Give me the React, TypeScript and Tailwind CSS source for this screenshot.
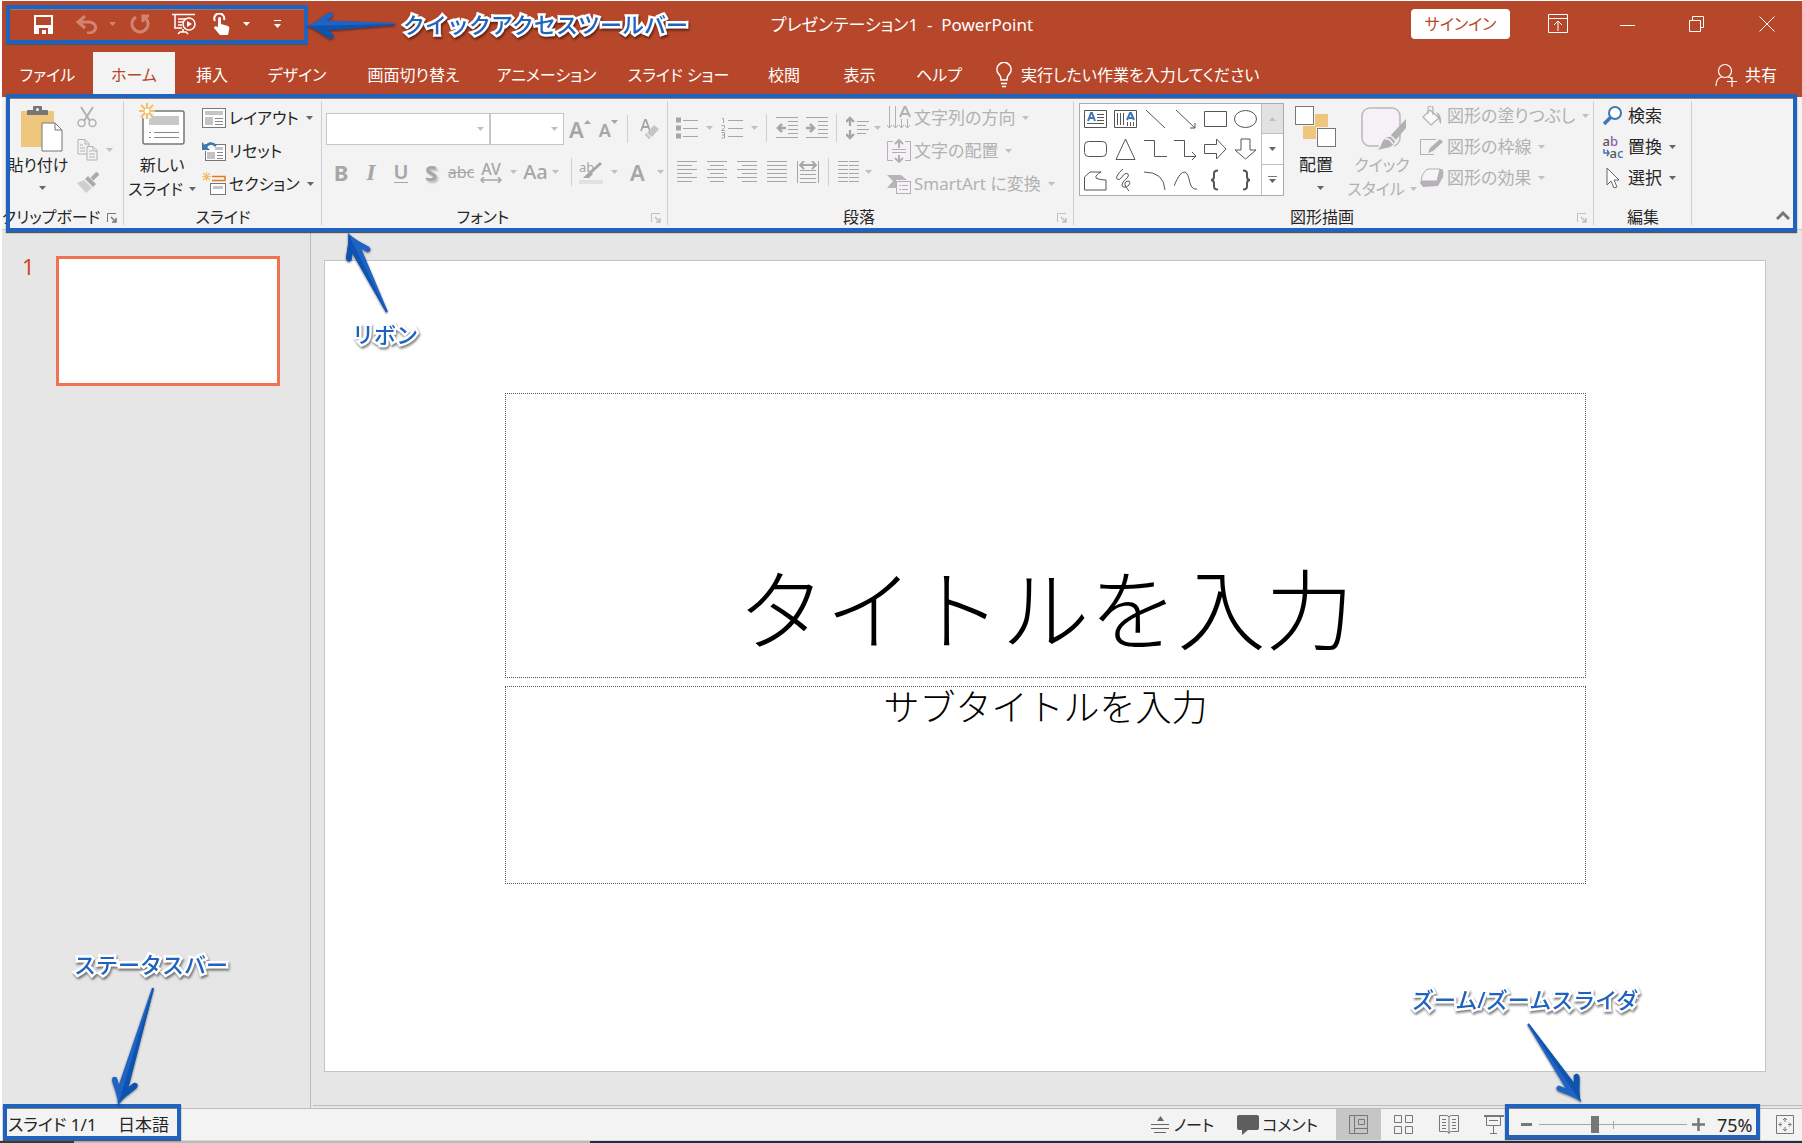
import React from "react";

type Kids = { children?: React.ReactNode };

/* ---------- shared pieces ---------- */

function Svg({ w, h, children, className = "" }: Kids & { w: number; h: number; className?: string }) {
  return (
    <svg width={w} height={h} viewBox={`0 0 ${w} ${h}`} fill="none" stroke="currentColor" strokeWidth={1.5} aria-hidden="true" className={`shrink-0 ${className}`}>
      {children}
    </svg>
  );
}

function Caret({ className = "text-[#666666]" }: { className?: string }) {
  return (
    <svg width="7" height="4" viewBox="0 0 7 4" aria-hidden="true" className={`shrink-0 ${className}`}>
      <path d="M0 0h7L3.5 4z" fill="currentColor" />
    </svg>
  );
}

function Divider() {
  return <span className="block h-7 w-px shrink-0 bg-[#d0d0d0]" />;
}

function Launcher({ className = "text-[#777777]" }: { className?: string }) {
  return (
    <button type="button" aria-label="詳細設定" className={`absolute right-[7px] top-[8px] ${className}`}>
      <Svg w={10} h={10}>
        <path d="M.5 9V.5H9" strokeWidth={1} />
        <path d="M4 4l4 4M9 5v4H5" strokeWidth={1.5} />
      </Svg>
    </button>
  );
}

function Group({ label, width, launcher, children }: Kids & { label: string; width: string; launcher?: React.ReactNode }) {
  return (
    <section aria-label={label} className={`relative flex shrink-0 flex-col ${width}`}>
      <div className="flex h-[108px]">{children}</div>
      <div className={`relative flex h-6 items-center justify-center whitespace-nowrap ${launcher ? "pr-6" : ""}`}>
        <span>{label}</span>
        {launcher}
      </div>
      <span className="absolute bottom-1 right-0 top-1 w-px bg-[#d0d0d0]" />
    </section>
  );
}

function Row({ icon, text, caret, disabled, height = "h-[33px]" }: { icon: React.ReactNode; text: string; caret?: boolean; disabled?: boolean; height?: string }) {
  return (
    <button type="button" disabled={disabled} className={`flex items-center gap-[3px] ${height} ${disabled ? "text-[#b1b1b1]" : ""}`}>
      <span className="flex w-6 shrink-0 justify-center">{icon}</span>
      <span>{text}</span>
      {caret && <Caret className={disabled ? "ml-1 text-[#c0c0c0]" : "ml-1 text-[#666666]"} />}
    </button>
  );
}

function Frame({ className }: { className: string }) {
  return <div className={`pointer-events-none absolute z-10 border-4 border-[#1f63bf] shadow-[0_1px_1px_#555,inset_0_1px_0_#8a7f7a] ${className}`} />;
}

function Note({ children, className }: Kids & { className: string }) {
  return (
    <p className={`pointer-events-none absolute z-10 whitespace-nowrap text-[22px] font-medium leading-6 text-[#1f63bf] drop-shadow-[1px_2px_1px_rgba(0,0,0,0.5)] [-webkit-text-stroke:5px_white] [font-feature-settings:normal] [paint-order:stroke_fill] ${className}`}>
      {children}
    </p>
  );
}

/* Tapered pointer from (tailX, tailY) to (tipX, tipY). */
function Pointer({ w, h, tip, tail, className }: { w: number; h: number; tip: [number, number]; tail: [number, number]; className: string }) {
  const dx = tail[0] - tip[0];
  const dy = tail[1] - tip[1];
  const len = Math.hypot(dx, dy);
  const angle = (Math.atan2(dy, dx) * 180) / Math.PI;
  return (
    <svg width={w} height={h} viewBox={`0 0 ${w} ${h}`} aria-hidden="true" className={`pointer-events-none absolute z-20 overflow-visible drop-shadow-[0_1px_1px_rgba(0,0,0,0.5)] ${className}`}>
      <g transform={`translate(${tip[0]} ${tip[1]}) rotate(${angle})`}>
        <path d={`M0 0C9 -3 14 -8 22 -13Q27 -14 26 -9L20 -5L${len} -1V1L20 5L26 9Q27 14 22 13C14 8 9 3 0 0Z`} fill="#1f63c4" />
        <path d={`M0 0L20 0L${len} 0V1L20 5L26 9Q27 14 22 13C14 8 9 3 0 0Z`} fill="#0d53b0" />
      </g>
    </svg>
  );
}

/* ---------- title bar ---------- */

function TitleBar() {
  return (
    <div className="relative grid h-[51px] grid-cols-[1fr_auto_1fr] items-start">
      <div className="flex h-[46px] items-center pl-8">
        <button type="button" aria-label="保存">
          <Svg w={19} h={19}>
            <path d="M0 0h19v19H0z" fill="currentColor" stroke="none" />
            <path d="M2 2h15v8H2zM5 13h9v6h-2v-4H8v4H5z" fill="#b7472a" stroke="none" />
          </Svg>
        </button>
        <button type="button" aria-label="元に戻す" className="ml-[23px] flex items-center gap-3 text-[#d18570]">
          <Svg w={21} h={19}>
            <path d="M9 1L2 7l7 6M2 7h11a6 5 0 010 11h-2" strokeWidth={3} />
          </Svg>
          <Caret className="text-[#d18570]" />
        </button>
        <button type="button" aria-label="やり直し" className="ml-[14px] text-[#d18570]">
          <Svg w={20} h={20}>
            <path d="M6 3a8 8 0 1 0 8 0M13 8V2h6" strokeWidth={3} />
          </Svg>
        </button>
        <button type="button" aria-label="先頭から開始" className="ml-[22px]">
          <Svg w={24} h={22}>
            <path d="M0 1.5h23M3 2v13h7M6 6h8M6 9h5M6 12h4M11 16v3M6 21l2-2h6l2 2" />
            <circle cx="17" cy="11" r="6" />
            <path d="M15 8l5 3-5 3z" fill="currentColor" stroke="none" />
          </Svg>
        </button>
        <button type="button" aria-label="タッチ/マウス モードの切り替え" className="ml-[17px] flex items-center gap-[13px]">
          <Svg w={17} h={22}>
            <path d="M2 8a5 5 0 1 1 9-1" strokeWidth={2} />
            <path d="M5 5q2-2 3 0v6l7 2q2 1 1 4l-1 5H7l-6-7q0-3 4-1z" fill="currentColor" stroke="none" />
          </Svg>
          <Caret className="text-white" />
        </button>
        <button type="button" aria-label="ユーザー設定" className="ml-[24px] flex flex-col items-center gap-[3px]">
          <span className="h-px w-[7px] bg-white" />
          <Caret className="text-white" />
        </button>
      </div>
      <h1 className="flex h-12 items-center whitespace-pre text-[17px]">{"プレゼンテーション1  -  PowerPoint"}</h1>
      <div className="flex h-[46px] items-center justify-end pr-[27px]">
        <button type="button" className="flex h-[30px] w-[99px] items-center justify-center rounded-sm bg-white text-base text-[#b7472a]">サインイン</button>
        <button type="button" aria-label="リボンの表示オプション" className="ml-[38px]">
          <Svg w={20} h={20}>
            <path d="M.5 .5h19v18H.5zM.5 4.5h19M10 17V7M6 11l4-4 4 4" strokeWidth={1} />
          </Svg>
        </button>
        <button type="button" aria-label="最小化" className="ml-[52px]">
          <Svg w={15} h={15}>
            <path d="M0 8.500h15" strokeWidth={1} />
          </Svg>
        </button>
        <button type="button" aria-label="元に戻す (縮小)" className="ml-[54px]">
          <Svg w={16} h={16}>
            <path d="M.5 4.500h11v11H.5zM3.500 4.500V.5h11v11h-3" strokeWidth={1} />
          </Svg>
        </button>
        <button type="button" aria-label="閉じる" className="ml-[54px]">
          <Svg w={16} h={16}>
            <path d="M.5 .5l15 15M15.500 .5l-15 15" strokeWidth={1} />
          </Svg>
        </button>
      </div>
      <Frame className="left-1 top-1 h-[39px] w-[302px]" />
      <Pointer w={90} h={28} tip={[1, 14]} tail={[89, 12]} className="left-[304px] top-[11px]" />
      <Note className="left-[401px] top-[11px]">クイックアクセスツールバー</Note>
    </div>
  );
}

/* ---------- tab strip ---------- */

const tabs = [
  { name: "ファイル", width: "w-[91px]" },
  { name: "ホーム", width: "w-[82px]", active: true },
  { name: "挿入", width: "w-[74px]" },
  { name: "デザイン", width: "w-[96px]" },
  { name: "画面切り替え", width: "w-[137px]" },
  { name: "アニメーション", width: "w-[129px]" },
  { name: "スライド ショー", width: "w-[135px]" },
  { name: "校閲", width: "w-[76px]" },
  { name: "表示", width: "w-[75px]" },
  { name: "ヘルプ", width: "w-[84px]" },
];

function TabStrip() {
  return (
    <nav className="flex h-[45px] items-stretch text-base">
      {tabs.map((t) => (
        <button key={t.name} type="button" className={`shrink-0 ${t.width} ${t.active ? "bg-[#f3f3f3] text-[#b7472a]" : ""}`}>
          {t.name}
        </button>
      ))}
      <button type="button" className="ml-[14px] flex items-center gap-2">
        <Svg w={18} h={26}>
          <path d="M6 18q0-4-3-7a7 7 0 1 1 12 0q-3 3-3 7zM6 21.500h6M7 24.500h4" />
        </Svg>
        実行したい作業を入力してください
      </button>
      <button type="button" className="ml-auto mr-[25px] flex items-center gap-2">
        <Svg w={22} h={24}>
          <circle cx="10" cy="8" r="6.500" strokeWidth={1.2} />
          <path d="M1 23q0-8 6-9M13 14q3 0 4 2M17 14v10M12 18.500h10" strokeWidth={1.2} />
        </Svg>
        共有
      </button>
    </nav>
  );
}

/* ---------- ribbon groups ---------- */

function Clipboard() {
  return (
    <Group label="クリップボード" width="w-[122px]" launcher={<Launcher />}>
      <button type="button" className="flex w-[72px] shrink-0 flex-col items-center pt-2">
        <Svg w={42} h={47} className="ml-2">
          <path d="M0 6h33v36H0z" fill="#efc77c" stroke="none" />
          <path d="M6 10V6q0-1 1-1h5V2q0-1 1-1h7q1 0 1 1v3h5q1 0 1 1v4z" fill="#777" stroke="none" />
          <circle cx="16.500" cy="4.500" r="1.500" fill="#f3f3f3" stroke="none" />
          <path d="M21 18h13l7 7v21H21z" fill="#fff" stroke="#777" strokeWidth={1} />
          <path d="M34 18v7h7" stroke="#777" strokeWidth={1} />
        </Svg>
        <span className="whitespace-nowrap leading-[26px]">貼り付け</span>
        <Caret className="ml-2 mt-2 text-[#666666]" />
      </button>
      <div className="ml-[3px] flex flex-col pt-[3px] text-[#b1b1b1]">
        <button type="button" disabled aria-label="切り取り" className="flex h-[33px] items-center">
          <Svg w={20} h={22}>
            <path d="M4 1l9 14M16 1L7 15" strokeWidth={2} />
            <circle cx="4.500" cy="17" r="3.500" />
            <circle cx="15.500" cy="17" r="3.500" />
          </Svg>
        </button>
        <button type="button" disabled aria-label="コピー" className="flex h-[33px] items-center gap-2">
          <Svg w={21} h={22}>
            <path d="M1 .5h7l4 4V15H1zM8 1v4h4M3 6h3M3 9h5M3 12h5" strokeWidth={1} />
            <path d="M10 7.500h6l4 4V21H10z" fill="#f3f3f3" strokeWidth={1} />
            <path d="M16 8v4h4M12 12h3M12 15h6M12 18h6" strokeWidth={1} />
          </Svg>
          <Caret className="text-[#c0c0c0]" />
        </button>
        <button type="button" disabled aria-label="書式のコピー/貼り付け" className="flex h-[33px] items-center">
          <Svg w={23} h={21}>
            <path d="M0 11l7-3 8 8-6 5z" fill="#cfcfcf" stroke="none" />
            <path d="M8 7l3-3 8 8-3 3z" fill="#aaa" stroke="none" />
            <path d="M15 7l6-6" stroke="#aaa" strokeWidth={4} />
          </Svg>
        </button>
      </div>
    </Group>
  );
}

function Slides() {
  return (
    <Group label="スライド" width="w-[198px]">
      <button type="button" className="flex w-[76px] shrink-0 flex-col items-center pt-[6px] leading-6">
        <Svg w={46} h={42}>
          <rect x="4" y="8" width="41" height="33" rx="2" fill="#fff" stroke="#777" />
          <path d="M10 13h30v9H10z" fill="#c8c8c8" stroke="none" />
          <path d="M10 29.500h2M15 29.500h25M10 34.500h2M15 34.500h25" stroke="#888" strokeWidth={1} />
          <circle cx="8" cy="8" r="8" fill="#f3f3f3" stroke="none" />
          <path d="M8 0v16M0 8h16M2 2l12 12M14 2L2 14" stroke="#efc06a" strokeWidth={2} />
          <circle cx="8" cy="8" r="3" fill="#fff" stroke="#efc06a" strokeWidth={1} />
        </Svg>
        <span className="mt-2">新しい</span>
        <span className="flex items-center gap-[6px] whitespace-nowrap">
          スライド
          <Caret />
        </span>
      </button>
      <div className="flex flex-col whitespace-nowrap pl-[2px] pt-1">
        <Row
          text="レイアウト"
          caret
          icon={
            <Svg w={24} h={20}>
              <rect x=".5" y=".5" width="23" height="19" fill="#fff" stroke="#777" strokeWidth={1} />
              <path d="M3 3h18v4H3zM3 9h8v8H3z" fill="#c4c4c4" stroke="none" />
              <path d="M13 10.500h8M13 13.500h8M13 16.500h8" stroke="#888" strokeWidth={1} />
            </Svg>
          }
        />
        <Row
          text="リセット"
          icon={
            <Svg w={24} h={20}>
              <rect x="3.500" y="3.500" width="20" height="16" fill="#fff" stroke="#777" strokeWidth={1} />
              <path d="M13 6h8v3h-8zM5 11h8v7H5z" fill="#c4c4c4" stroke="none" />
              <path d="M15 11.500h6M15 14.500h6M15 17.500h6" stroke="#888" strokeWidth={1} />
              <path d="M0 1v9h9zM12 0v7H6z" fill="#f3f3f3" stroke="none" />
              <path d="M3 7q5-8 11-2" stroke="#3f77b3" strokeWidth={2.500} />
              <path d="M0 1v8h8z" fill="#3f77b3" stroke="none" />
            </Svg>
          }
        />
        <Row
          text="セクション"
          caret
          icon={
            <Svg w={24} h={23}>
              <path d="M4.500 0v9M0 4.500h9M1 1l7 7M8 1L1 8" stroke="#efc06a" strokeWidth={1.200} />
              <path d="M10 4.500h13v4H10" stroke="#e07b1f" />
              <rect x="8.500" y="11.500" width="15" height="11" fill="#fff" stroke="#777" strokeWidth={1} />
              <path d="M11 14h10v3H11z" fill="#c4c4c4" stroke="none" />
            </Svg>
          }
        />
      </div>
    </Group>
  );
}

function Combo({ label, width }: { label: string; width: string }) {
  return (
    <label className={`relative flex h-8 shrink-0 items-center ${width}`}>
      <select disabled aria-label={label} className="h-full w-full appearance-none border border-[#c6c6c6] bg-white" />
      <Caret className="absolute right-[6px] text-[#c0c0c0]" />
    </label>
  );
}

const glyph = "flex shrink-0 items-center justify-center";

function Fonts() {
  return (
    <Group label="フォント" width="w-[346px]" launcher={<Launcher className="text-[#c0c0c0]" />}>
      <div className="flex flex-col pl-[4px] pt-4 text-[#a6a6a6]">
        <div className="flex h-8 items-center">
          <Combo label="フォント名" width="w-[164px]" />
          <Combo label="フォント サイズ" width="w-[74px]" />
          <button type="button" disabled aria-label="フォント サイズの拡大" className="ml-[5px] flex text-[22px] font-semibold">
            A<Caret className="mt-[7px] -scale-y-100 text-[#a6a6a6]" />
          </button>
          <button type="button" disabled aria-label="フォント サイズの縮小" className="ml-[8px] flex pt-[2px] text-lg font-semibold">
            A<Caret className="mt-1 text-[#a6a6a6]" />
          </button>
          <span className="ml-[9px] mr-3">
            <Divider />
          </span>
          <button type="button" disabled aria-label="すべての書式をクリア">
            <Svg w={20} h={22}>
              <path d="M1 13L5 2h1l4 11M2.500 9h6" strokeWidth={1.800} />
              <path d="M14 7l5 4-7 8-5-4z" fill="#c4c4c4" stroke="none" />
              <path d="M5 17l4 4 2-1-5-5z" fill="#c4c4c4" stroke="none" />
            </Svg>
          </button>
        </div>
        <div className="mt-[11px] flex h-8 items-center text-xl">
          <button type="button" disabled aria-label="太字" className={`${glyph} w-[30px] text-[22px] font-bold`}>B</button>
          <button type="button" disabled aria-label="斜体" className={`${glyph} w-[30px] font-['Liberation_Serif',serif] text-2xl font-bold italic`}>I</button>
          <button type="button" disabled aria-label="下線" className={`${glyph} w-[30px]`}>
            <span className="border-b border-current font-semibold leading-5">U</span>
          </button>
          <button type="button" disabled aria-label="文字の影" className={`${glyph} w-[30px] text-[22px] font-bold [text-shadow:2px_2px_2px_#bbb]`}>S</button>
          <button type="button" disabled aria-label="取り消し線" className={`${glyph} w-[30px] text-base line-through`}>abc</button>
          <button type="button" disabled aria-label="文字の間隔" className={`${glyph} ml-1 w-[37px] gap-2`}>
            <span className="flex flex-col items-center text-base font-medium leading-4">
              AV
              <Svg w={22} h={6}>
                <path d="M1 3h20M4 0L1 3l3 3M18 0l3 3-3 3" />
              </Svg>
            </span>
            <Caret className="text-[#c0c0c0]" />
          </button>
          <button type="button" disabled aria-label="文字種の変換" className={`${glyph} w-[48px] gap-1 font-medium`}>
            Aa
            <Caret className="text-[#c0c0c0]" />
          </button>
          <span className="ml-[6px] mr-[7px]">
            <Divider />
          </span>
          <button type="button" disabled aria-label="蛍光ペンの色" className={`${glyph} gap-2`}>
            <span className="relative flex h-6 w-6 items-start">
              <span className="-mt-px text-[13px] leading-4">ab</span>
              <Svg w={24} h={24} className="absolute inset-0">
                <path d="M0 20h24v4H0z" fill="#e4dfe6" stroke="none" />
                <path d="M22 3L12 12" strokeWidth={3} />
                <path d="M11 11l3 3-4 4H4z" fill="currentColor" stroke="none" />
              </Svg>
            </span>
            <Caret className="text-[#c0c0c0]" />
          </button>
          <button type="button" disabled aria-label="フォントの色" className={`${glyph} ml-3 gap-3 text-[22px] font-semibold`}>
            A
            <Caret className="text-[#c0c0c0]" />
          </button>
        </div>
      </div>
    </Group>
  );
}

function Lines({ d, w = 21 }: { d: string; w?: number }) {
  return (
    <Svg w={w} h={22}>
      <path d={d} strokeWidth={1} />
    </Svg>
  );
}

const alignIcons = [
  { name: "左揃え", d: "M0 .5h20M0 4.500h15M0 8.500h20M0 12.500h15M0 16.500h20M0 20.500h15" },
  { name: "中央揃え", d: "M0 .5h20M3 4.500h14M0 8.500h20M3 12.500h14M0 16.500h20M3 20.500h14" },
  { name: "右揃え", d: "M0 .5h20M5 4.500h15M0 8.500h20M5 12.500h15M0 16.500h20M5 20.500h15" },
  { name: "両端揃え", d: "M0 .5h20M0 4.500h20M0 8.500h20M0 12.500h20M0 16.500h20M0 20.500h20" },
];

function Paragraph() {
  return (
    <Group label="段落" width="w-[406px]" launcher={<Launcher className="text-[#c0c0c0]" />}>
      <div className="flex w-[219px] shrink-0 flex-col pl-2 pt-[15px] text-[#a6a6a6]">
        <div className="flex h-8 items-center">
          <button type="button" disabled aria-label="箇条書き" className="flex items-center gap-2">
            <Svg w={22} h={22}>
              <path d="M7 3.500h15M7 11.500h15M7 19.500h15" strokeWidth={1} />
              <path d="M0 3h5M0 11h5M0 19h5" strokeWidth={5} />
            </Svg>
            <Caret className="text-[#c0c0c0]" />
          </button>
          <button type="button" disabled aria-label="段落番号" className="ml-2 flex items-center gap-2">
            <Svg w={22} h={22}>
              <path d="M7 3.500h15M7 11.500h15M7 19.500h15" strokeWidth={1} />
              <path d="M1 1.500h1.500V6M.5 8.500h3v2l-3 3h3.500M.5 15.500h3v5.500h-3M1 18h2" strokeWidth={1} />
            </Svg>
            <Caret className="text-[#c0c0c0]" />
          </button>
          <span className="ml-2 mr-[9px]">
            <Divider />
          </span>
          <button type="button" disabled aria-label="インデントを減らす">
            <Svg w={23} h={22}>
              <path d="M0 .5h22M12 4.500h10M12 8.500h10M12 12.500h10M12 16.500h10M0 20.500h22" strokeWidth={1} />
              <path d="M10 11H2M6 7l-4 4 4 4" strokeWidth={2.500} />
            </Svg>
          </button>
          <button type="button" disabled aria-label="インデントを増やす" className="ml-[7px]">
            <Svg w={23} h={22}>
              <path d="M0 .5h22M12 4.500h10M12 8.500h10M12 12.500h10M12 16.500h10M0 20.500h22" strokeWidth={1} />
              <path d="M0 11h8M4 7l4 4-4 4" strokeWidth={2.500} />
            </Svg>
          </button>
          <span className="ml-[7px] mr-[9px]">
            <Divider />
          </span>
          <button type="button" disabled aria-label="行間" className="flex items-center gap-[5px]">
            <Svg w={23} h={24}>
              <path d="M4 2v8M0 6l4-4 4 4M4 14v8M0 18l4 4 4-4" strokeWidth={2.300} />
              <path d="M11 5.500h12M11 9.500h9M11 13.500h12M11 17.500h9" strokeWidth={1} />
            </Svg>
            <Caret className="text-[#c0c0c0]" />
          </button>
        </div>
        <div className="ml-px mt-3 flex h-8 items-center gap-[9px]">
          {alignIcons.map((a) => (
            <button key={a.name} type="button" disabled aria-label={a.name}>
              <Lines d={a.d} />
            </button>
          ))}
          <button type="button" disabled aria-label="均等割り付け">
            <Svg w={22} h={22}>
              <path d="M.5 0v22M21.500 0v22M3 9.500h16M3 13.500h16M3 17.500h16M3 21.500h16" strokeWidth={1} />
              <path d="M4 4h14M7 0L3 4l4 4M15 0l4 4-4 4" strokeWidth={1.800} />
            </Svg>
          </button>
          <Divider />
          <button type="button" disabled aria-label="段組み" className="flex items-center gap-[6px]">
            <Lines d="M0 .5h10M11 .5h10M0 4.500h10M11 4.500h10M0 8.500h10M11 8.500h10M0 12.500h10M11 12.500h10M0 16.500h10M11 16.500h10M0 20.500h10M11 20.500h10" />
            <Caret className="text-[#c0c0c0]" />
          </button>
        </div>
      </div>
      <div className="flex flex-col whitespace-nowrap pt-1 text-[17px]">
        <Row
          text="文字列の方向"
          caret
          disabled
          icon={
            <Svg w={24} h={24}>
              <path d="M2.500 0v22M8.500 0v22M14.500 13v9M20.500 13v9M0 19l2.500 3L5 19M6 19l2.500 3 2.500-3M12 19l2.500 3 2.500-3M18 19l2.500 3 2.500-3" strokeWidth={1} />
              <path d="M13 11l4.500-10h1L23 11M15 8h6" strokeWidth={2} />
            </Svg>
          }
        />
        <Row
          text="文字の配置"
          caret
          disabled
          icon={
            <Svg w={24} h={24}>
              <path d="M1 3h22v18H1z" fill="#f6f1f7" stroke="none" />
              <path d="M6 2.500H.5v19H6M18 2.500h5.500v19H18M5 10.500h14M5 13.500h14" strokeWidth={1} />
              <path d="M12 9V1M8 5l4-4 4 4M12 16v7M8 19l4 4 4-4" strokeWidth={2} />
            </Svg>
          }
        />
        <Row
          text="SmartArt に変換"
          caret
          disabled
          icon={
            <Svg w={24} h={20}>
              <path d="M0 1h14l6 5H9v8H0l6-7z" fill="#b8b4ba" stroke="none" />
              <rect x="9.500" y="7.500" width="14" height="12" fill="#f6f1f7" strokeWidth={1} />
              <path d="M12 11.500h2M15 11.500h6M12 15.500h2M15 15.500h6" strokeWidth={1} />
            </Svg>
          }
        />
      </div>
    </Group>
  );
}

const shapes: { name: string; art: React.ReactNode }[] = [
  {
    name: "テキスト ボックス",
    art: (
      <>
        <path d="M.5 2.500h22v17H.5zM13 6.500h7M13 9.500h7M13 12.500h7M3 15.500h17" />
        <path d="M4 13l3-8h1l3 8M5 10h5" stroke="#3f77b3" strokeWidth={2} />
      </>
    ),
  },
  {
    name: "縦書きテキスト ボックス",
    art: (
      <>
        <path d="M.5 2.500h22v17H.5zM3.500 5v12M6.500 5v12M9.500 5v12M13.500 14v4M16.500 14v4M19.500 14v4" />
        <path d="M13 12l3-7h1l3 7M14 10h5" stroke="#3f77b3" strokeWidth={2} />
      </>
    ),
  },
  { name: "線", art: <path d="M2 2l19 18" /> },
  { name: "矢印", art: <path d="M2 2l19 18M21 15v5h-5" /> },
  { name: "正方形/長方形", art: <path d="M.5 3.500h22v15H.5z" /> },
  { name: "楕円", art: <ellipse cx="11.500" cy="11" rx="11" ry="8.500" /> },
  { name: "四角形: 角を丸くする", art: <rect x=".5" y="3.500" width="22" height="15" rx="4" /> },
  { name: "二等辺三角形", art: <path d="M11.500 1L21 21.500H2z" /> },
  { name: "コネクタ: カギ線", art: <path d="M0 2.500h10.500v16H23" /> },
  { name: "コネクタ: カギ線矢印", art: <path d="M0 2.500h10.500v16H22M18 14l4 4-4 4" /> },
  { name: "矢印: 右", art: <path d="M.5 6.500h12V1L22 11 12.500 21v-5.500H.5z" /> },
  { name: "矢印: 下", art: <path d="M7 1h9v11h6L11.500 21 1 12h6z" /> },
  { name: "フリーフォーム: 図形", art: <path d="M.5 21V8L6 3h11q-6 3-5 6 3 2 10 2v10z" /> },
  { name: "フリーフォーム: フリーハンド", art: <path d="M9 0q-8 7-6 10 2 2 5-2 3-5 6-3 2 2-5 8-2 4 0 5 4 1 6-2 2-4-1-4-5 1-2 6l3 4" /> },
  { name: "円弧", art: <path d="M0 3q20 0 21 18" /> },
  { name: "曲線", art: <path d="M0 17Q6 2 11 3q3 1 5 11 2 7 7 6" /> },
  { name: "左中かっこ", art: <path d="M14 1.500q-4 0-4 3v3q0 3.500-3 3.500 3 0 3 3.500v3q0 3 4 3" strokeWidth={2} /> },
  { name: "右中かっこ", art: <path d="M9 1.500q4 0 4 3v3q0 3.500 3 3.500-3 0-3 3.500v3q0 3-4 3" strokeWidth={2} /> },
];

function Drawing() {
  return (
    <Group label="図形描画" width="w-[520px]" launcher={<Launcher className="text-[#c0c0c0]" />}>
      <div className="ml-[5px] mt-[6px] flex h-[93px] w-[205px] shrink-0 border border-[#ababab] bg-white">
        <div className="grid flex-1 grid-cols-6 grid-rows-3 text-[#555555]">
          {shapes.map((s) => (
            <button key={s.name} type="button" aria-label={s.name} className="flex items-center justify-center">
              <svg width="23" height="22" viewBox="0 0 23 22" fill="none" stroke="currentColor" strokeWidth={1} aria-hidden="true">
                {s.art}
              </svg>
            </button>
          ))}
        </div>
        <div className="grid w-[22px] grid-rows-3 divide-y divide-[#c0c0c0] border-l border-[#c0c0c0]">
          <button type="button" aria-label="前の行" className="flex items-center justify-center bg-[#e2e2e2]">
            <Caret className="-scale-y-100 text-[#c0c0c0]" />
          </button>
          <button type="button" aria-label="次の行" className="flex items-center justify-center">
            <Caret />
          </button>
          <button type="button" aria-label="その他" className="flex flex-col items-center justify-center gap-[2px]">
            <span className="h-px w-[9px] bg-[#777777]" />
            <Caret />
          </button>
        </div>
      </div>
      <button type="button" className="ml-1 flex w-[56px] shrink-0 flex-col items-center pt-[9px] text-[17px] leading-6">
        <Svg w={42} h={42}>
          <path d="M20 8h13v13H20zM8 20h13v13H8z" fill="#efc77c" stroke="none" />
          <rect x=".5" y=".5" width="18" height="18" fill="#fff" stroke="#777" strokeWidth={1} />
          <rect x="22.500" y="22.500" width="18" height="18" fill="#fff" stroke="#777" strokeWidth={1} />
        </Svg>
        <span className="mt-[5px]">配置</span>
        <Caret className="ml-2 mt-[9px] text-[#666666]" />
      </button>
      <button type="button" disabled className="flex w-[76px] shrink-0 flex-col items-center pt-[10px] leading-6 text-[#b1b1b1]">
        <Svg w={46} h={45} className="ml-1">
          <rect x="1" y="1" width="38" height="38" rx="8" fill="#f6f1f7" stroke="#bbb7bd" />
          <path d="M45 12v9L34 34l-5-5z" fill="#b1b1b1" stroke="none" />
          <path d="M30 29l5 5q-2 7-11 8-6 1-12 3 7-4 8-9 3-8 10-7z" fill="#b1b1b1" stroke="#f3f3f3" />
          <path d="M24 32q5-1 8 5" stroke="#f3f3f3" />
        </Svg>
        <span className="mt-px">クイック</span>
        <span className="flex items-center gap-[5px] whitespace-nowrap">
          スタイル
          <Caret className="text-[#c0c0c0]" />
        </span>
      </button>
      <div className="flex flex-col whitespace-nowrap pt-[3px] text-[17px]">
        <Row
          text="図形の塗りつぶし"
          caret
          disabled
          height="h-[31px]"
          icon={
            <Svg w={20} h={20}>
              <path d="M8 4l9 8-8 7-8-8z" fill="#fbf7fc" strokeWidth={1.200} />
              <path d="M6 8V3q0-3 3-3 2 0 2 3v6" strokeWidth={1.200} />
              <path d="M14 6q6 2 5 12-2-1-2-6z" fill="currentColor" stroke="none" />
            </Svg>
          }
        />
        <Row
          text="図形の枠線"
          caret
          disabled
          height="h-[31px]"
          icon={
            <Svg w={24} h={18}>
              <path d="M16 1.500H.5v15H14" strokeWidth={1} />
              <path d="M8 15l2-5 10-9 3 3-10 9z" fill="currentColor" stroke="none" />
            </Svg>
          }
        />
        <Row
          text="図形の効果"
          caret
          disabled
          height="h-[31px]"
          icon={
            <Svg w={24} h={20}>
              <path d="M7 1h15q2 1 1 8l-5 9-15 1-3-4z" fill="#b5b1b7" stroke="none" />
              <path d="M8 1h12l-3 12H1q1-9 7-12z" fill="#f8f3f9" stroke="#b1b1b1" strokeWidth={1} />
            </Svg>
          }
        />
      </div>
    </Group>
  );
}

function Editing() {
  return (
    <Group label="編集" width="w-[98px]">
      <div className="flex flex-col whitespace-nowrap pl-[7px] pt-[3px] text-[17px]">
        <Row
          text="検索"
          height="h-[31px]"
          icon={
            <Svg w={20} h={20} className="text-[#3f77b3]">
              <circle cx="12" cy="7" r="6" fill="#fff" strokeWidth={2} />
              <path d="M8 11l-7 7" strokeWidth={3.500} />
            </Svg>
          }
        />
        <Row
          text="置換"
          caret
          height="h-[31px]"
          icon={
            <span className="flex flex-col text-[13px] font-medium leading-3 text-[#555555]">
              <span className="flex">
                a<span className="text-[#8d5bb0]">b</span>
              </span>
              <span className="flex items-center">
                <Svg w={7} h={8} className="text-[#3f77b3]">
                  <path d="M1 0v4h5M4 1l2 3-2 3" />
                </Svg>
                a<span className="text-[#3f77b3]">c</span>
              </span>
            </span>
          }
        />
        <Row
          text="選択"
          caret
          height="h-[31px]"
          icon={
            <Svg w={14} h={22}>
              <path d="M1 1v17l4-4 3 7 3-1-3-7h5z" fill="#fff" stroke="#666" strokeWidth={1} />
            </Svg>
          }
        />
      </div>
    </Group>
  );
}

function Ribbon() {
  return (
    <div className="relative flex h-[133px] border-b border-[#c8c8c8] bg-[#f3f3f3] text-base text-[#262626]">
      <Clipboard />
      <Slides />
      <Fonts />
      <Paragraph />
      <Drawing />
      <Editing />
      <button type="button" aria-label="リボンを折りたたむ" className="mb-2 ml-auto mr-3 self-end">
        <Svg w={14} h={10} className="text-[#777777]">
          <path d="M1 8l6-6 6 6" strokeWidth={3} />
        </Svg>
      </button>
      <Frame className="-bottom-[3px] -top-[3px] left-1 right-[5px]" />
      <Pointer w={42} h={82} tip={[1, 1]} tail={[40, 80]} className="left-[345px] top-[135px]" />
      <Note className="left-[350px] top-[225px]">リボン</Note>
    </div>
  );
}

/* ---------- workspace ---------- */

function Workspace() {
  return (
    <main className="flex flex-1 bg-[#e6e6e6]">
      <aside className="flex w-[309px] shrink-0 items-start border-r border-[#bcbcbc] pt-[26px]">
        <span className="w-[54px] pl-5 text-[22px] leading-5 text-[#d24726]">1</span>
        <button type="button" aria-label="スライド 1" className="h-[130px] w-[224px] border-[3px] border-[#f07253] bg-white" />
      </aside>
      <div className="flex-1 pb-[2px] pl-[2px]">
        <div className="h-full border-b border-[#bcbcbc] pb-8 pl-[11px] pr-9 pt-[30px]">
          <div className="grid aspect-[1442/812] w-full grid-cols-[180fr_1081fr_179fr] grid-rows-[132fr_285fr_8fr_198fr_187fr] border border-[#c4c4c4] bg-white text-center font-['Noto_Sans_CJK_JP',sans-serif] font-extralight text-black [font-feature-settings:normal]">
            <div className="col-start-2 row-start-2 flex items-end justify-center border border-dotted border-[#555555] pb-4">
              <h2 className="text-[88px] leading-[112px]">タイトルを入力</h2>
            </div>
            <div className="col-start-2 row-start-4 border border-dotted border-[#555555]">
              <p className="text-4xl font-light leading-9">サブタイトルを入力</p>
            </div>
          </div>
        </div>
      </div>
    </main>
  );
}

/* ---------- status bar ---------- */

function StatusBar() {
  return (
    <footer className="relative flex h-8 items-center border-t border-[#bcbcbc] bg-[#f3f3f3] text-base text-[#262626]">
      <span className="ml-[6px] w-[110px] pt-px text-[17px]">スライド 1/1</span>
      <span className="pt-px text-[17px]">日本語</span>
      <div className="ml-auto flex h-full items-center pr-2 text-[#262626]">
        <button type="button" className="flex items-center gap-1">
          <Svg w={19} h={18} className="text-[#666666]">
            <path d="M9.500 0L13 5H6z" fill="currentColor" stroke="none" />
            <path d="M0 8.500h18M0 12.500h18M3 16.500h12" strokeWidth={1} />
          </Svg>
          ノート
        </button>
        <button type="button" className="ml-[23px] flex items-center gap-[2px]">
          <Svg w={23} h={20} className="text-[#5e5e5e]">
            <path d="M2 0h18q2 0 2 2v11q0 2-2 2h-9l-6 5v-5H2q-2 0-2-2V2q0-2 2-2z" fill="currentColor" stroke="none" />
          </Svg>
          コメント
        </button>
        <div className="ml-[18px] flex h-full text-[#777777]">
          <button type="button" aria-label="標準" className="flex w-[45px] items-center justify-center bg-[#c6c6c6]">
            <Svg w={19} h={19}>
              <path d="M.5 .5h18v18H.5zM5.500 .5v18M5.500 13.500h13M9.500 4.500h6v5h-6z" strokeWidth={1} />
            </Svg>
          </button>
          <button type="button" aria-label="スライド一覧" className="flex w-[45px] items-center justify-center">
            <Svg w={19} h={19}>
              <path d="M.5 .5h7v7h-7zM11.500 .5h7v7h-7zM.5 11.500h7v7h-7zM11.500 11.500h7v7h-7z" strokeWidth={1} />
            </Svg>
          </button>
          <button type="button" aria-label="閲覧表示" className="flex w-[45px] items-center justify-center">
            <Svg w={20} h={19}>
              <path d="M.5 .5h7q2 0 2.500 1.500Q10.500 .5 12.500 .5h7v16h-7q-2 0-2.500 2-.5-2-2.500-2h-7zM10 2v16M3 4.500h4M3 7.500h4M3 10.500h4M3 13.500h4M13 4.500h4M13 7.500h4M13 10.500h4M13 13.500h4" strokeWidth={1} />
            </Svg>
          </button>
          <button type="button" aria-label="スライド ショー" className="flex w-[33px] items-center justify-end">
            <Svg w={20} h={19}>
              <path d="M0 1h20" strokeWidth={2} />
              <path d="M2.500 2v8.500h14V2M5 5.500h9M9.500 11v7M6 18.500h7" strokeWidth={1} />
            </Svg>
          </button>
        </div>
        <div className="relative ml-[5px] flex h-full w-[248px] items-center">
          <button type="button" aria-label="縮小" className="ml-3 h-[3px] w-[11px] bg-[#777777]" />
          <label className="relative ml-[7px] flex items-center">
            <span className="absolute left-1/2 h-2 w-px bg-[#a6a6a6]" />
            <input
              type="range"
              min={0}
              max={100}
              defaultValue={37}
              aria-label="ズーム"
              className="h-[17px] w-[148px] appearance-none bg-transparent [&::-webkit-slider-runnable-track]:h-px [&::-webkit-slider-runnable-track]:bg-[#a6a6a6] [&::-webkit-slider-thumb]:-mt-2 [&::-webkit-slider-thumb]:h-[17px] [&::-webkit-slider-thumb]:w-2 [&::-webkit-slider-thumb]:appearance-none [&::-webkit-slider-thumb]:bg-[#777777]"
            />
          </label>
          <button type="button" aria-label="拡大" className="ml-[5px]">
            <Svg w={13} h={13} className="text-[#777777]">
              <path d="M0 6.500h13M6.500 0v13" strokeWidth={2.500} />
            </Svg>
          </button>
          <span className="ml-3 pt-px text-lg">75%</span>
          <Frame className="-right-[3px] -left-[4px] -top-[5px] h-[35px]" />
          <Pointer w={55} h={80} tip={[54, 79]} tail={[1, 1]} className="-top-[86px] left-[18px]" />
          <Note className="-top-[122px] -left-[97px]">ズーム/ズームスライダ</Note>
        </div>
        <button type="button" aria-label="ウィンドウに合わせる" className="ml-[19px]">
          <Svg w={18} h={19} className="text-[#777777]">
            <path d="M6 .5H.5v18H6M12 .5h5.500v18H12M6 .5h6M6 18.500h6M9 3v4M9 12v4M3 9.500h3M12 9.500h3" strokeWidth={1} />
            <path d="M7 5l2-2 2 2M7 14l2 2 2-2M5 7.500l-2 2 2 2M13 7.500l2 2-2 2" strokeWidth={1} />
          </Svg>
        </button>
      </div>
      <Frame className="-top-[5px] left-px h-[36px] w-[178px]" />
      <Pointer w={37} h={120} tip={[1, 118]} tail={[36, 1]} className="-top-[122px] left-[115px]" />
      <Note className="-top-[157px] left-[72px]">ステータスバー</Note>
    </footer>
  );
}

export default function App() {
  return (
    <div className="flex min-h-screen flex-col overflow-hidden bg-white pl-[2px] pt-px font-['Noto_Sans','Noto_Sans_CJK_JP',sans-serif] [font-feature-settings:'palt']">
      <header className="bg-[#b7472a] text-white">
        <TitleBar />
        <TabStrip />
      </header>
      <Ribbon />
      <Workspace />
      <StatusBar />
      <div className="-ml-[2px] flex h-[3px] border-t border-[#d8d8d8]">
        <span className="w-[74px] bg-[#23413f]" />
        <span className="w-[516px] bg-[#b9bdb9]" />
        <span className="flex-1 bg-[#1c2f45]" />
      </div>
    </div>
  );
}
